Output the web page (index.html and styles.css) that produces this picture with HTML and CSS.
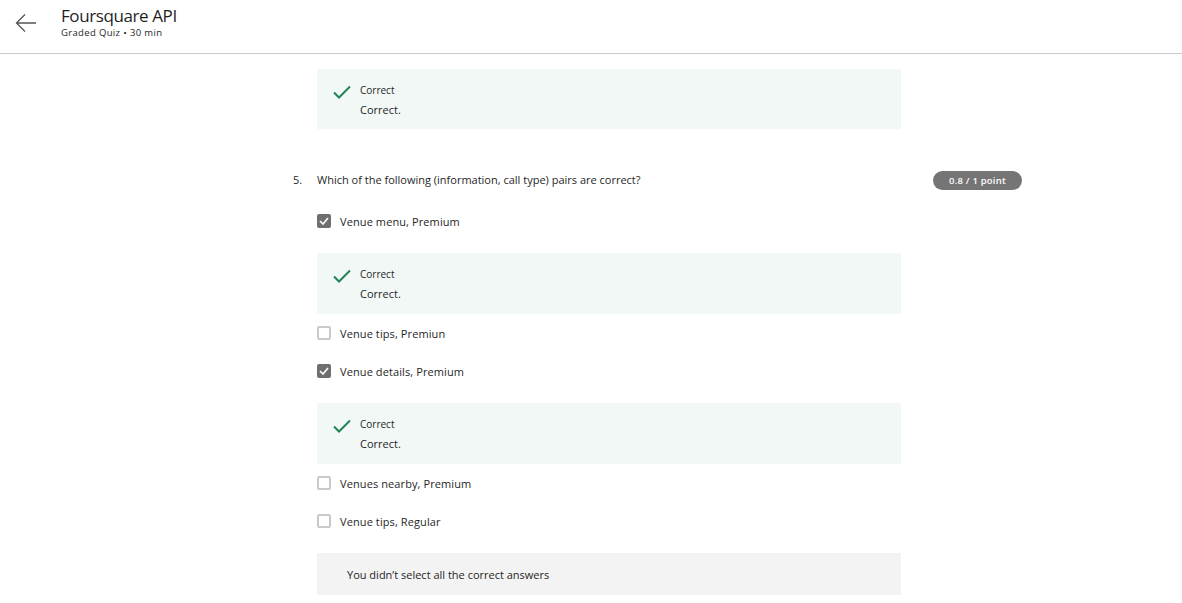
FILE: index.html
```html
<!DOCTYPE html>
<html>
<head>
<meta charset="utf-8">
<link rel="stylesheet" href="styles.css">
</head>
<body>
<header class="topbar">
  <button class="back" aria-label="Back">
    <svg width="22" height="20" viewBox="0 0 22 20"><path d="M21 10H2M10 1.5L1.5 10L10 18.5" fill="none" stroke="#555" stroke-width="1.3"/></svg>
  </button>
  <div class="titles">
    <div class="title">Foursquare API</div>
    <div class="subtitle">Graded Quiz • 30 min</div>
  </div>
</header>
<main class="main">
  <div class="content">
    <div class="feedback first">
      <svg class="check" width="18" height="14" viewBox="0 0 18 14"><path d="M1 7.5L6 12.5L17 1.5" fill="none" stroke="#1f8354" stroke-width="2"/></svg>
      <div class="fb-text"><div class="fb-label">Correct</div><div class="fb-msg">Correct.</div></div>
    </div>
  </div>

  <section class="question">
    <div class="q-head">
      <span class="q-num">5.</span>
      <span class="q-text">Which of the following (information, call type) pairs are correct?</span>
      <span class="badge">0.8 / 1 point</span>
    </div>
    <div class="content">
      <div class="option"><span class="box checked"><svg width="10" height="8" viewBox="0 0 10 8"><path d="M1 4L4 7L9 1" fill="none" stroke="#fff" stroke-width="1.6"/></svg></span>Venue menu, Premium</div>
      <div class="feedback">
        <svg class="check" width="18" height="14" viewBox="0 0 18 14"><path d="M1 7.5L6 12.5L17 1.5" fill="none" stroke="#1f8354" stroke-width="2"/></svg>
        <div class="fb-text"><div class="fb-label">Correct</div><div class="fb-msg">Correct.</div></div>
      </div>
      <div class="option"><span class="box"></span>Venue tips, Premiun</div>
      <div class="option"><span class="box checked"><svg width="10" height="8" viewBox="0 0 10 8"><path d="M1 4L4 7L9 1" fill="none" stroke="#fff" stroke-width="1.6"/></svg></span>Venue details, Premium</div>
      <div class="feedback">
        <svg class="check" width="18" height="14" viewBox="0 0 18 14"><path d="M1 7.5L6 12.5L17 1.5" fill="none" stroke="#1f8354" stroke-width="2"/></svg>
        <div class="fb-text"><div class="fb-label">Correct</div><div class="fb-msg">Correct.</div></div>
      </div>
      <div class="option"><span class="box"></span>Venues nearby, Premium</div>
      <div class="option"><span class="box"></span>Venue tips, Regular</div>
      <div class="summary">You didn’t select all the correct answers</div>
    </div>
  </section>
</main>
</body>
</html>
```
FILE: styles.css
```css
* { box-sizing: border-box; }
html, body { margin: 0; padding: 0; background: #fff; }
body {
  font-family: "Open Sans", "Noto Sans", sans-serif;
  color: #1f1f1f;
  width: 1182px;
  height: 603px;
  overflow: hidden;
}
.topbar {
  height: 54px;
  border-bottom: 1px solid #c8c8c8;
  display: flex;
  align-items: flex-start;
}
.back {
  border: 0;
  background: none;
  padding: 0;
  margin: 13px 0 0 15px;
  width: 22px;
  height: 20px;
  display: flex;
}
.titles { margin-left: 24px; padding-top: 5px; }
.title { font-size: 17px; line-height: 22px; color: #1f1f1f; letter-spacing: -0.4px; }
.subtitle { font-size: 9.5px; line-height: 12px; color: #1f1f1f; letter-spacing: 0.35px; }

.main { padding-top: 15px; }
.content { margin-left: 317px; width: 584px; }

.feedback {
  background: #f2f8f5;
  display: flex;
  align-items: flex-start;
  padding: 14px 16px 11px;
  margin: 22px 0 9px;
  gap: 9px;
}
.feedback.first { margin: 0; padding-bottom: 10px; }
.check { margin-top: 2px; flex: none; }
.fb-label { font-size: 10px; line-height: 14px; }
.fb-msg { font-size: 11px; line-height: 18px; margin-top: 4px; }

.question { margin-top: 42px; }
.q-head {
  display: flex;
  align-items: center;
  margin-left: 293px;
  height: 18px;
}
.q-num { width: 24px; font-size: 11px; line-height: 16px; }
.q-text { width: 616px; font-size: 11px; line-height: 16px; }
.badge {
  background: #757575;
  color: #fff;
  font-size: 9.5px;
  font-weight: 600;
  border-radius: 10px;
  height: 19px;
  width: 89px;
  display: flex;
  align-items: center;
  justify-content: center;
  letter-spacing: 0.2px;
}
.q-head + .content { margin-top: 22px; }

.option {
  display: flex;
  align-items: center;
  height: 20px;
  margin-bottom: 18px;
  font-size: 11px;
  letter-spacing: 0.1px;
}
.box {
  width: 14px;
  height: 14px;
  border: 2px solid #c9c9c9;
  border-radius: 2px;
  margin-right: 9px;
  flex: none;
  display: flex;
  align-items: center;
  justify-content: center;
}
.box.checked { background: #6f6f6f; border-color: #6f6f6f; }

.summary {
  background: #f3f3f3;
  height: 42px;
  margin-top: 22px;
  padding-left: 30px;
  display: flex;
  align-items: center;
  font-size: 11px;
}
```
